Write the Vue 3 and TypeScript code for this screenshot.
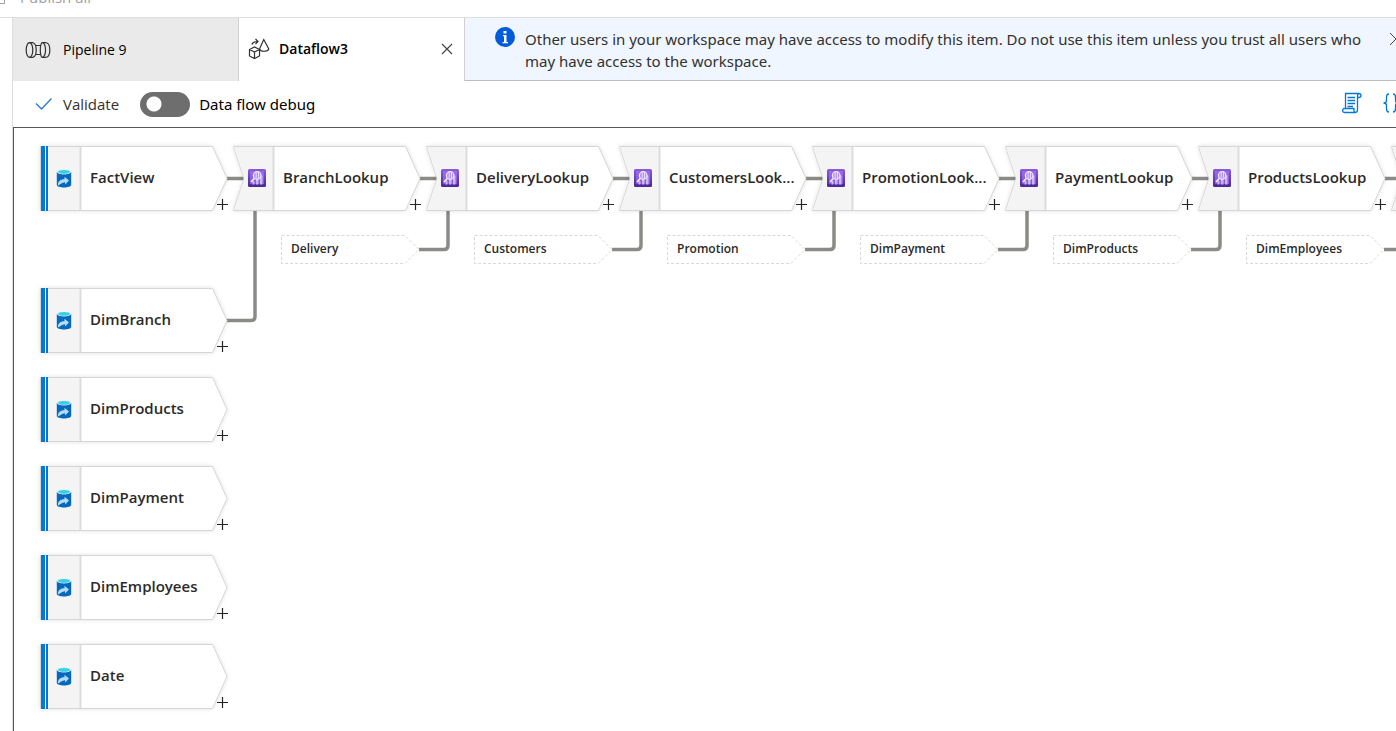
<script setup lang="ts">
import { ref } from 'vue'

interface FlowNode {
  id: string
  label: string
  x: number
  y: number
}

const debug = ref(false)

const STEP = 193
const sources: FlowNode[] = [
  { id: 's0', label: 'FactView', x: 26, y: 18 },
  { id: 's1', label: 'DimBranch', x: 26, y: 160 },
  { id: 's2', label: 'DimProducts', x: 26, y: 249 },
  { id: 's3', label: 'DimPayment', x: 26, y: 338 },
  { id: 's4', label: 'DimEmployees', x: 26, y: 427 },
  { id: 's5', label: 'Date', x: 26, y: 516 },
]

const lookups: FlowNode[] = [
  'BranchLookup',
  'DeliveryLookup',
  'CustomersLook...',
  'PromotionLook...',
  'PaymentLookup',
  'ProductsLookup',
  '',
].map((label, i) => ({ id: 'l' + i, label, x: 219 + i * STEP, y: 18 }))

const references: FlowNode[] = [
  'Delivery',
  'Customers',
  'Promotion',
  'DimPayment',
  'DimProducts',
  'DimEmployees',
].map((label, i) => ({ id: 'r' + i, label, x: 267 + i * STEP, y: 106 }))

const links: string[] = [
  ...lookups.map((n) => `M${n.x - 6} 50.5h18`),
  ...references.map((n) => `M${n.x + 138} 121.5h25q4 0 4 -4V83`),
  'M213 192.5h24q4 0 4 -4V83',
]

const place = (n: FlowNode) => ({ left: n.x + 'px', top: n.y + 'px' })
</script>

<template>
  <div class="page">
    <header class="topbar">
      <button class="publish" type="button" disabled>
        <svg width="16" height="16" viewBox="0 0 16 16" aria-hidden="true">
          <path d="M1.5 1.500h12v13h-12z" />
        </svg>
        <span>Publish all</span>
      </button>
    </header>

    <main class="workspace">
      <div class="head">
        <button class="tab" type="button">
          <svg width="26" height="18" viewBox="0 0 26 18" aria-hidden="true">
            <ellipse cx="4.500" cy="9" rx="3.300" ry="7.300" />
            <path d="M4.500 1.700H8c2 .6 3.200 3.500 3.200 7.300S10 15.700 8 16.300H4.500" />
            <path d="M10.500 4.500h5.500M10.500 13.500h5.500" />
            <path d="M21.500 1.700H17c-1 1-1.700 3.500-1.700 7.300s.7 6.300 1.700 7.300h4.500" />
            <path d="M18 1.700c1.500 1 2.500 3.500 2.500 7.300s-1 6.300-2.500 7.300M21.500 1.700c2 .6 3.300 3.500 3.300 7.300s-1.300 6.700-3.300 7.300" />
          </svg>
          <span>Pipeline 9</span>
        </button>
        <div class="tab active">
          <button class="tab-name" type="button">
            <svg width="22" height="22" viewBox="0 0 22 22" aria-hidden="true">
              <path d="M1.500 11.500l5-2.500 5 2.500v6.500l-5 2.500-5-2.500zM1.500 11.500l5 2.500 5-2.500M6.500 14v6.500" />
              <path d="M15.800 1.500L11.500 11c1 3 8 3 9.300 0zM4 6.500c.5-2 2-3 5.500-3M7.500 1L10 3.500 7.500 6" />
            </svg>
            <span>Dataflow3</span>
          </button>
          <button class="icon-button" type="button" aria-label="Close tab">
            <svg width="12" height="12" viewBox="0 0 12 12"><path d="M1 1l10 10M11 1L1 11" /></svg>
          </button>
        </div>
        <div class="banner" role="status">
          <svg class="info" width="20" height="20" viewBox="0 0 20 20" aria-hidden="true">
            <circle cx="10" cy="10" r="10" />
            <path d="M8.500 4h3v2.500h-3zM8 8h3.500v7H13v1.300H7.500V15h1.500V9.300H8z" />
          </svg>
          <p>
            Other users in your workspace may have access to modify this item. Do not use this item
            unless you trust all users who may have access to the workspace.
          </p>
          <button class="icon-button" type="button" aria-label="Dismiss">
            <svg width="14" height="14" viewBox="0 0 14 14"><path d="M1 1l12 12M13 1L1 13" /></svg>
          </button>
        </div>
      </div>

      <div class="toolbar">
        <button class="validate" type="button">
          <svg width="18" height="14" viewBox="0 0 18 14" aria-hidden="true"><path d="M1 6.500l5.500 5.500L16.500 1.500" /></svg>
          <span>Validate</span>
        </button>
        <label class="debug">
          <input v-model="debug" type="checkbox" role="switch" />
          <span>Data flow debug</span>
        </label>
        <div class="tools">
          <button class="icon-button" type="button" aria-label="Script">
            <svg width="20" height="22" viewBox="0 0 20 22">
              <path d="M3.500 16.500v-15h13c3.300 0 3.300 4 0 4h-1M15.500 3.500v14c0 4-4 3.500-3.500.5v-1.500H2.500c-2.500 0-2.500 4 0 4h11M15.500 4c0-1.500.3-2.500 1.500-2.500" />
              <path d="M5.500 5.500h7.500M5.500 8.500h7.500M5.500 11.500h7.500M5.500 14.500h5.500" />
            </svg>
          </button>
          <button class="icon-button" type="button" aria-label="Code">
            <svg width="22" height="22" viewBox="0 0 22 22">
              <path d="M7 2C4.500 2 4.500 3.500 4.500 5v3.500c0 1.500-1 2.500-3 2.500 2 0 3 1 3 2.500V17c0 1.500 0 3 2.500 3M11 2c2.500 0 2.500 1.500 2.500 3v3.500c0 1.500 1 2.500 3 2.500-2 0-3 1-3 2.500V17c0 1.500 0 3-2.500 3" />
            </svg>
          </button>
        </div>
      </div>

      <section class="canvas" aria-label="Data flow">
        <svg class="links" aria-hidden="true">
          <path v-for="d in links" :key="d" :d="d" />
        </svg>

        <div v-for="n in sources" :key="n.id" class="node source" :style="place(n)">
          <svg class="shape" width="190" height="66" viewBox="0 0 190 66" aria-hidden="true">
            <path class="body" d="M.5.500H172.500L187 32.500 172.500 64.500H.5z" />
            <path class="side" d="M8 1H40V64H8z" />
            <path class="divider" d="M40.500 1V64" />
            <path class="stripe" d="M1 0h4v65H1zM6 0h2v65H6z" />
            <g transform="translate(16 23)">
              <path class="can" d="M.8 2.800v13c0 3.600 14.400 3.600 14.400 0v-13z" />
              <ellipse class="can-rim" cx="8" cy="2.800" rx="7.200" ry="2.600" />
              <ellipse class="can-top" cx="8" cy="2.800" rx="6" ry="1.900" />
              <path class="can-arrow" d="M2 16.500c-.5-3.500 2-6.200 6.500-6.200V7.800l4.500 3.700-4 4v-2.300c-3.200 0-4.200 2.300-7 3.300z" />
            </g>
          </svg>
          <span class="label">{{ n.label }}</span>
          <button class="add" type="button" :aria-label="'Add after ' + n.label">
            <svg width="11" height="11" viewBox="0 0 11 11"><path d="M5.500 0v11M0 5.500h11" /></svg>
          </button>
        </div>

        <div v-for="n in lookups" :key="n.id" class="node lookup" :style="place(n)">
          <svg class="shape" width="190" height="66" viewBox="0 0 190 66" aria-hidden="true">
            <defs>
              <linearGradient :id="'g' + n.id" x1="0" y1="0" x2="0" y2="1">
                <stop offset="0" stop-color="#8b5be0" />
                <stop offset="1" stop-color="#4a2696" />
              </linearGradient>
            </defs>
            <path class="body" d="M.5.500H172.500L187 32.500 172.500 64.500H.5L11 32.500z" />
            <path class="side" d="M1.200 1H40V64H1.200L11.500 32.500z" />
            <path class="divider" d="M40.500 1V64" />
            <g transform="translate(15 23)">
              <rect width="18" height="18" rx="1.500" :fill="`url(#g${n.id})`" />
              <path class="glass-pane" d="M2 2h14v13H2z" />
              <path class="bars" d="M4.500 12h2v3.500h-2zM8 9.500h2.500v6H8zM12 6.500h2.500v9H12z" />
              <circle class="lens" cx="9.200" cy="6.500" r="3.800" />
              <path class="lens handle" d="M6.300 9.500L3 13" />
              <path class="lens thin" d="M8.200 3v6.500M10.500 3v6.500" />
            </g>
          </svg>
          <span class="label">{{ n.label }}</span>
          <button class="add" type="button" :aria-label="'Add after ' + n.label">
            <svg width="11" height="11" viewBox="0 0 11 11"><path d="M5.500 0v11M0 5.500h11" /></svg>
          </button>
        </div>

        <div v-for="n in references" :key="n.id" class="node reference" :style="place(n)">
          <svg class="shape" width="140" height="30" viewBox="0 0 140 30" aria-hidden="true">
            <path class="dashed" d="M.5 1.500H124L138 15.500 124 29.500H.5z" />
          </svg>
          <span class="label">{{ n.label }}</span>
        </div>
      </section>
    </main>
  </div>
</template>

<style>
body {
  margin: 0;
  overflow: hidden;
}
</style>

<style scoped>
.page {
  display: flex;
  flex-direction: column;
  height: 100vh;
  overflow: hidden;
  background: #fff;
  color: #1b1a19;
  font-family: 'Open Sans', 'Noto Sans', sans-serif;
  font-size: 15px;
}
button {
  margin: 0;
  padding: 0;
  border: 0;
  background: none;
  color: inherit;
  font: inherit;
  cursor: pointer;
}
svg {
  display: block;
  flex: none;
  fill: none;
}
.topbar {
  display: flex;
  align-items: flex-end;
  flex: none;
  height: 17px;
  overflow: hidden;
  border-bottom: 1px solid #dedede;
}
.publish {
  display: flex;
  align-items: center;
  gap: 13px;
  height: 36px;
  margin-left: -9px;
  margin-bottom: 2px;
  color: #a19f9d;
}
.publish svg {
  stroke: #a19f9d;
}
.workspace {
  display: flex;
  flex-direction: column;
  flex: 1;
  min-height: 0;
  margin-left: 12px;
  border-left: 1px solid #dedede;
}
.head {
  display: flex;
  flex: none;
  height: 63px;
}
.tab {
  display: flex;
  align-items: center;
  box-sizing: border-box;
  flex: none;
  width: 226px;
  padding: 0 12px;
  gap: 12px;
  border-right: 1px solid #d2d0ce;
  background: #eaeaea;
  color: #000;
  font-size: 14px;
}
.tab svg {
  stroke: #323130;
  stroke-width: 1.2;
}
.tab.active {
  justify-content: space-between;
  padding: 0 11px 2px 9px;
  background: #fff;
  font-weight: 600;
}
.tab-name {
  display: flex;
  align-items: center;
  gap: 9px;
}
.banner {
  display: flex;
  align-items: flex-start;
  flex: 1;
  min-width: 0;
  border-bottom: 1px solid #bdbdbd;
  background: #eff6ff;
  color: #323130;
  font-family: 'Noto Sans', 'Open Sans', sans-serif;
}
.banner p {
  flex: none;
  width: 864px;
  margin: 10px 0 0 10px;
  line-height: 22px;
}
.info {
  margin: 9px 0 0 30px;
}
.info circle {
  fill: #015cda;
}
.info path {
  fill: #fff;
}
.icon-button {
  flex: none;
}
.icon-button svg {
  stroke: #484644;
}
.banner .icon-button {
  margin: 14px 0 0 0;
}
.toolbar {
  display: flex;
  align-items: center;
  flex: none;
  height: 46px;
}
.validate {
  display: flex;
  align-items: center;
  gap: 10px;
  margin-left: 22px;
  color: #323130;
}
.validate svg {
  stroke: #2e7cd6;
  stroke-width: 1.4;
}
.debug {
  display: flex;
  align-items: center;
  gap: 9px;
  margin-left: 21px;
  color: #000;
  font-family: 'Noto Sans', 'Open Sans', sans-serif;
}
.debug input {
  appearance: none;
  width: 50px;
  height: 25px;
  margin: 0;
  border-radius: 13px;
  background: radial-gradient(circle at 14px 12px, #fff 7px, #6e6e6e 8px);
}
.debug input:checked {
  background: radial-gradient(circle at 36px 12px, #fff 7px, #0078d4 8px);
}
.tools {
  display: flex;
  gap: 20px;
  margin-left: auto;
  margin-right: -8px;
  padding-bottom: 2px;
}
.tools svg {
  stroke: #0078d4;
  stroke-width: 1.3;
}
.canvas {
  position: relative;
  flex: 1;
  min-height: 0;
  overflow: hidden;
  border-top: 1px solid #555;
  border-left: 1px solid #555;
}
.links {
  position: absolute;
  inset: 0;
  width: 100%;
  height: 100%;
}
.links path {
  stroke: #8a8a86;
  stroke-width: 3.500;
}
.node {
  position: absolute;
  display: flex;
  align-items: center;
  color: #2b2a29;
  font-weight: 600;
}
.source,
.lookup {
  width: 190px;
  height: 65px;
}
.shape {
  position: absolute;
  top: 0;
  left: 0;
  overflow: visible;
}
.source .shape,
.lookup .shape {
  filter: drop-shadow(0 0 2px rgba(0, 0, 0, 0.12));
}
.body {
  fill: #fff;
  stroke: #d6d6d6;
}
.side {
  fill: #f4f4f4;
}
.divider {
  stroke: #dcdcdc;
  stroke-width: 2;
}
.stripe {
  fill: #0078d4;
}
.can {
  fill: #0568bd;
}
.can-rim {
  fill: #e3f1f8;
}
.can-top {
  fill: #35cfe8;
}
.can-arrow {
  fill: #b5dcf7;
}
.glass-pane {
  fill: #a67af4;
  opacity: 0.6;
}
.bars {
  fill: #cdb5fa;
}
.lens {
  fill: #b592f5;
  stroke: #f3ecff;
  stroke-width: 1.2;
}
.handle {
  stroke-width: 1.8;
}
.thin {
  stroke-width: 0.8;
}
.label {
  position: relative;
  padding-bottom: 3px;
  margin-left: 50px;
  white-space: nowrap;
}
.add {
  position: absolute;
  left: 177px;
  top: 53px;
}
.add svg {
  stroke: #252423;
  stroke-width: 1.2;
}
.reference {
  width: 140px;
  height: 30px;
  font-size: 12px;
}
.reference .label {
  padding-bottom: 2px;
  margin-left: 10px;
}
.dashed {
  fill: #fff;
  stroke: #d8d8d8;
  stroke-dasharray: 3 2;
}
</style>
